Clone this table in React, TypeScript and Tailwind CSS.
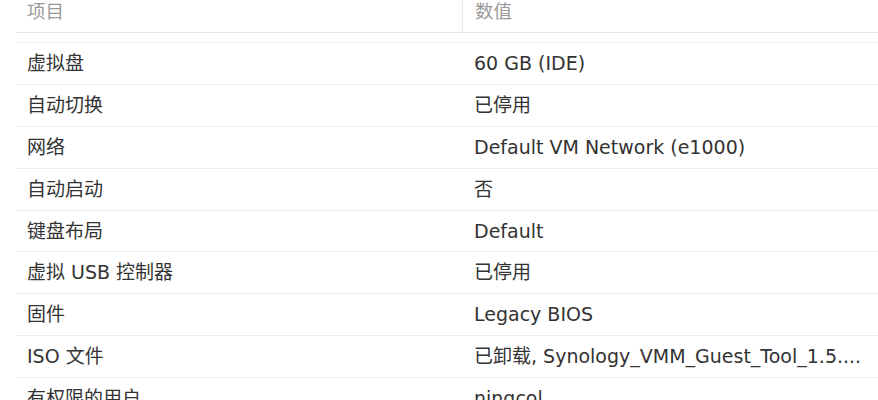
import React from "react";

const rows: [string, string][] = [
  ["虚拟盘", "60 GB (IDE)"],
  ["自动切换", "已停用"],
  ["网络", "Default VM Network (e1000)"],
  ["自动启动", "否"],
  ["键盘布局", "Default"],
  ["虚拟 USB 控制器", "已停用"],
  ["固件", "Legacy BIOS"],
  ["ISO 文件", "已卸载, Synology_VMM_Guest_Tool_1.5...."],
  ["有权限的用户", "ningcol"],
];

export default function App() {
  return (
    <div
      className="w-[878px] h-[400px] overflow-hidden bg-white pl-4"
      style={{ fontFamily: '"DejaVu Sans", "Noto Sans CJK SC", sans-serif' }}
    >
      <div className="flex h-[33px] border-b border-[#e4e6e8] text-[18.5px] leading-[24px] text-[#9a9a9a]">
        <div className="w-[446px] pl-[11px]">项目</div>
        <div className="flex-1 border-l border-[#e8e8e8] pl-[12px] h-[32px]">数值</div>
      </div>
      <div className="mt-[9px] border-t border-[#eceef0]">
        {rows.map(([k, v], i) => (
          <div
            key={i}
            className={
              (i === 4 ? "h-[41px] " : "h-[42px] ") +
              "flex items-center border-b border-[#eaeced] text-[19px] text-[#333333]"
            }
          >
            <div className="w-[446px] pl-[11px] whitespace-nowrap">{k}</div>
            <div className="flex-1 pl-[12px] whitespace-nowrap">{v}</div>
          </div>
        ))}
      </div>
    </div>
  );
}
